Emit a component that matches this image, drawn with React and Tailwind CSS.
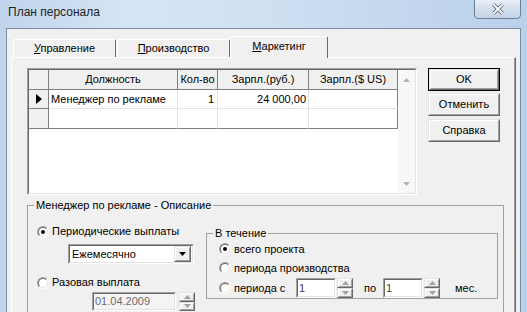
import React from 'react';

const Radio = ({ checked }) => (
  <span className="flex h-[12px] w-[12px] shrink-0 rounded-full border border-t-[#a0a0a0] border-l-[#a0a0a0] border-r-white border-b-white">
    <span className="flex h-full w-full items-center justify-center rounded-full border border-t-[#696969] border-l-[#696969] border-r-[#e3e3e3] border-b-[#e3e3e3] bg-white">
      {checked && <span className="h-[4px] w-[4px] rounded-full bg-black" />}
    </span>
  </span>
);

const RadioRow = ({ checked, children, className = '' }) => (
  <div className={`flex items-center ${className}`}>
    <Radio checked={checked} />
    <span className="ml-[3px] leading-[13px]">{children}</span>
  </div>
);

const Sunken = ({ className = '', inner = '', children }) => (
  <div className={`border border-t-[#a0a0a0] border-l-[#a0a0a0] border-r-white border-b-white ${className}`}>
    <div className={`flex h-full items-center border border-t-[#696969] border-l-[#696969] border-r-[#e3e3e3] border-b-[#e3e3e3] ${inner}`}>
      {children}
    </div>
  </div>
);

const Raised = ({ className = '', children }) => (
  <div className={`border border-t-[#e3e3e3] border-l-[#e3e3e3] border-r-[#696969] border-b-[#696969] bg-[#f0f0f0] ${className}`}>
    <div className="flex h-full items-center justify-center border border-t-white border-l-white border-r-[#a0a0a0] border-b-[#a0a0a0]">
      {children}
    </div>
  </div>
);

const Arrow = ({ down, color = '#a0a0a0' }) => (
  <svg width="7" height="4" viewBox="0 0 7 4">
    {down ? <path d="M0 0h7L3.5 4z" fill={color} /> : <path d="M3.5 0L7 4H0z" fill={color} />}
  </svg>
);

const Spinner = ({ className = '' }) => (
  <div className={`flex w-[16px] flex-col ${className}`}>
    <Raised className="h-1/2 w-full"><Arrow /></Raised>
    <Raised className="h-1/2 w-full"><Arrow down /></Raised>
  </div>
);

const Button = ({ children, isDefault }) => (
  <div className={`h-[23px] w-[72px] ${isDefault ? 'border border-black' : ''}`}>
    <Raised className="h-full w-full">{children}</Raised>
  </div>
);

const Tab = ({ active, width, className = '', children }) => (
  <div
    className={`flex items-center justify-center rounded-t-[2px] border-t border-l border-white border-r border-r-[#696969] bg-[#f0f0f0] ${
      active ? 'relative z-10 -mb-px h-[22px] pb-[2px]' : 'h-[18px]'
    } ${width} ${className}`}
  >
    <span className="leading-[13px]">{children}</span>
  </div>
);

const HeadCell = ({ w, children, className = '' }) => (
  <div className={`flex items-center justify-center border-r border-b border-[#808080] bg-[#f0f0f0] ${w} ${className}`}>
    {children}
  </div>
);

const App = () => {
  return (
    <div className="flex h-[312px] w-[527px] flex-col overflow-hidden bg-[linear-gradient(90deg,#bfd4ec,#d6e5f5_25%,#cfe0f2_50%,#c4d8ee_75%,#b9d0ea)] font-['Liberation_Sans',Arial,sans-serif] text-[11px] text-black">
      {/* title bar */}
      <div className="flex h-[28px] shrink-0 items-start">
        <div className="pl-[8px] pt-[5px] text-[12px] leading-[15px] text-[#1e1e1e]">План персонала</div>
        <div className="flex-1" />
        <div className="mr-[6px] -mt-px flex h-[20px] w-[47px] items-center justify-center rounded-b-[4px] border border-[#6f7e93] bg-[linear-gradient(#e9eff7,#d3dfee_50%,#c3d3e7)]">
          <svg width="16" height="12" viewBox="0 0 16 12">
            <path d="M3.5 1.5L12.5 10.5M12.5 1.5L3.5 10.5" stroke="#55606f" strokeWidth="3.6" />
            <path d="M3.5 1.5L12.5 10.5M12.5 1.5L3.5 10.5" stroke="#ffffff" strokeWidth="1.8" />
          </svg>
        </div>
      </div>

      {/* client area */}
      <div className="mx-[6px] flex flex-1 flex-col border-l border-t border-r border-[#7f8da0] bg-[#f0f0f0] px-[4px] pt-[7px]">
        {/* tabs */}
        <div className="flex h-[21px] items-end">
          <Tab width="w-[103px]" className="ml-[2px]">
            <span className="underline">У</span>правление
          </Tab>
          <Tab width="w-[113px]" className="ml-[1px]">
            <span className="underline">П</span>роизводство
          </Tab>
          <Tab active width="w-[98px]">
            <span className="underline">М</span>аркетинг
          </Tab>
        </div>

        {/* tab page */}
        <div className="flex-1 border-t border-l border-white border-r border-r-[#696969]">
          <div className="h-full border-r border-[#a0a0a0] pl-[15px] pt-[10px]">
            <div className="flex items-start">
              {/* grid */}
              <div className="h-[127px] w-[390px] border border-t-[#a0a0a0] border-l-[#a0a0a0] border-r-white border-b-white">
                <div className="flex h-full border border-t-[#696969] border-l-[#696969] border-r-[#e3e3e3] border-b-[#e3e3e3] bg-white">
                  <div className="w-[369px]">
                    <div className="flex h-[20px]">
                      <HeadCell w="w-[20px]" />
                      <HeadCell w="w-[129px]">Должность</HeadCell>
                      <HeadCell w="w-[40px]">Кол-во</HeadCell>
                      <HeadCell w="w-[91px]">Зарпл.(руб.)</HeadCell>
                      <HeadCell w="w-[89px]">Зарпл.($ US)</HeadCell>
                    </div>
                    <div className="flex h-[19px]">
                      <HeadCell w="w-[20px]">
                        <svg width="6" height="10" viewBox="0 0 6 10">
                          <path d="M0 0L6 5L0 10z" fill="#000" />
                        </svg>
                      </HeadCell>
                      <div className="flex w-[129px] items-center border-r border-b border-[#e3e3e3] pl-[2px]">Менеджер по рекламе</div>
                      <div className="flex w-[40px] items-center justify-end border-r border-b border-[#e3e3e3] pr-[3px]">1</div>
                      <div className="flex w-[91px] items-center justify-end border-r border-b border-[#e3e3e3] pr-[2px]">24 000,00</div>
                      <div className="w-[89px] border-r border-b border-r-[#808080] border-b-[#e3e3e3]" />
                    </div>
                    <div className="flex h-[20px]">
                      <HeadCell w="w-[20px]" />
                      <div className="w-[129px] border-r border-b border-r-[#e3e3e3] border-b-[#808080]" />
                      <div className="w-[40px] border-r border-b border-r-[#e3e3e3] border-b-[#808080]" />
                      <div className="w-[91px] border-r border-b border-r-[#e3e3e3] border-b-[#808080]" />
                      <div className="w-[89px] border-r border-b border-[#808080]" />
                    </div>
                  </div>
                  {/* scrollbar */}
                  <div className="flex w-[17px] flex-col justify-between bg-[#f8f8f8]">
                    <div className="flex h-[17px] items-center justify-center pt-[3px]"><Arrow color="#b4b4b4" /></div>
                    <div className="flex h-[17px] items-center justify-center pb-[1px]"><Arrow down color="#b4b4b4" /></div>
                  </div>
                </div>
              </div>

              {/* buttons */}
              <div className="ml-[11px] flex flex-col">
                <Button isDefault>OK</Button>
                <div className="mt-[2px]"><Button>Отменить</Button></div>
                <div className="mt-[3px]"><Button>Справка</Button></div>
              </div>
            </div>

            {/* description group */}
            <fieldset className="mt-[4px] w-[477px] border border-[#a0a0a0] pb-[30px]">
              <legend className="ml-[6px] px-[2px] leading-[13px]">Менеджер по рекламе - Описание</legend>
              <div className="flex items-start">
                <div className="w-[178px] shrink-0">
                  <RadioRow checked className="ml-[9px] mt-[13px] h-[13px]">Периодические выплаты</RadioRow>
                  <Sunken className="ml-[40px] mt-[6px] h-[20px] w-[126px]" inner="bg-white pl-[2px] justify-between">
                    <span>Ежемесячно</span>
                    <Raised className="mr-px h-[16px] w-[17px]"><Arrow down color="#000" /></Raised>
                  </Sunken>
                  <RadioRow className="ml-[9px] mt-[12px] h-[13px]">Разовая выплата</RadioRow>
                  <div className="ml-[64px] mt-[3px] flex h-[19px]">
                    <Sunken className="h-full w-[84px]" inner="bg-[#f4f4f4] pl-[1px] text-[#6d6d6d]">01.04.2009</Sunken>
                    <Spinner className="ml-[3px] h-full" />
                  </div>
                </div>

                <fieldset className="mt-[15px] w-[292px] border border-[#a0a0a0]">
                  <legend className="ml-[6px] px-[2px] leading-[13px]">В течение</legend>
                  <div className="pl-[12px]">
                    <RadioRow checked className="h-[18px]">всего проекта</RadioRow>
                    <RadioRow className="h-[20px]">периода производства</RadioRow>
                    <div className="flex h-[20px] items-center">
                      <RadioRow className="w-[77px]">периода с</RadioRow>
                      <Sunken className="h-[20px] w-[40px]" inner="bg-white pl-[1px] text-[#404040]">1</Sunken>
                      <Spinner className="ml-[1px] h-[20px]" />
                      <span className="ml-[11px] w-[19px]">по</span>
                      <Sunken className="h-[20px] w-[40px]" inner="bg-white pl-[1px] text-[#404040]">1</Sunken>
                      <Spinner className="ml-[1px] h-[20px]" />
                      <span className="ml-[15px]">мес.</span>
                    </div>
                  </div>
                </fieldset>
              </div>
            </fieldset>
          </div>
        </div>
      </div>
    </div>
  );
};

export default App;
